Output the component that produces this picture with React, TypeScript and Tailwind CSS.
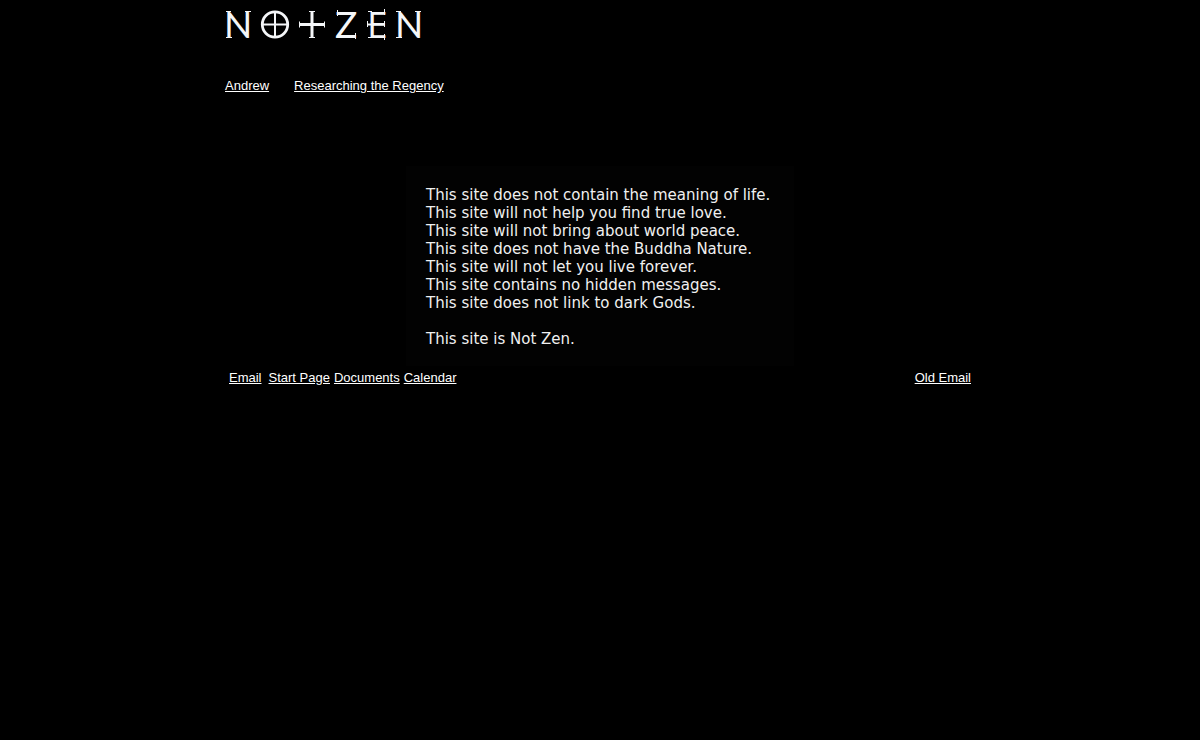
const lines = [
  'This site does not contain the meaning of life.',
  'This site will not help you find true love.',
  'This site will not bring about world peace.',
  'This site does not have the Buddha Nature.',
  'This site will not let you live forever.',
  'This site contains no hidden messages.',
  'This site does not link to dark Gods.',
]

type NavLinkProps = {
  href: string
  label: string
}

function NavLink({ href, label }: NavLinkProps) {
  return (
    <a href={href} className="underline hover:text-gray-300">
      {label}
    </a>
  )
}

function Logo() {
  return (
    <svg
      viewBox="0 0 200 48"
      className="w-[200px] h-12 overflow-visible"
      role="img"
      aria-label="Not Zen"
      fill="none"
      stroke="#f4f6f8"
    >
      <g
        fill="#f4f6f8"
        stroke="none"
        fontFamily="Lato, sans-serif"
        fontSize="37"
      >
        <text x="-1" y="38">N</text>
        <text x="110" y="38">Z</text>
        <text x="142" y="38" fontFamily="Open Sans, sans-serif">E</text>
        <text x="170" y="38">N</text>
      </g>
      {/* serifs */}
      <g strokeWidth="1">
        <path d="M1 11.5h5M20 11.5h6M1 37.5h6M171 11.5h5M190 11.5h6M171 37.5h6" />
        <path d="M112.5 10v6M130.5 33v6M159.5 9v6M159.5 34v6M159.5 21v6M142.5 21v6" />
        <path d="M143 11.5h4M143 37.5h4" />
        <path d="M142 24.5h5" strokeWidth="2" />
      </g>
      {/* circled cross */}
      <circle cx="50" cy="24.5" r="12.7" strokeWidth="2.8" />
      <path d="M50 12v25M37.5 24.5h25" strokeWidth="2" />
      {/* cross */}
      <path d="M87 11v27M74 24.5h26" strokeWidth="3" />
      <path d="M84 11.5h6M84 37.5h6M74.5 21.5v6M99.5 21.5v6" strokeWidth="1" />
    </svg>
  )
}

export default function App() {
  return (
    <div className="min-h-screen bg-black text-white text-[13px] leading-4 font-['Liberation_Sans',Arial,sans-serif]">
      <div className="max-w-[750px] mx-auto">
        <header>
          <Logo />
          <nav className="flex gap-[25px] pt-[30px]">
            <NavLink href="#andrew" label="Andrew" />
            <NavLink href="#regency" label="Researching the Regency" />
          </nav>
        </header>
        <main className="max-w-[388px] mx-auto mt-[72px] px-5 pt-5 pb-[18px] bg-[#020202] text-[#f0f0f0] text-[15px] leading-[18px] font-['DejaVu_Sans',sans-serif]">
          {lines.map((line) => (
            <p key={line}>{line}</p>
          ))}
          <p className="mt-[18px]">This site is Not Zen.</p>
        </main>
        <footer className="flex justify-between px-1 pt-1">
          <nav className="flex gap-1">
            <span className="mr-[3px]">
              <NavLink href="#email" label="Email" />
            </span>
            <NavLink href="#start" label="Start Page" />
            <NavLink href="#documents" label="Documents" />
            <NavLink href="#calendar" label="Calendar" />
          </nav>
          <NavLink href="#old-email" label="Old Email" />
        </footer>
      </div>
    </div>
  )
}
